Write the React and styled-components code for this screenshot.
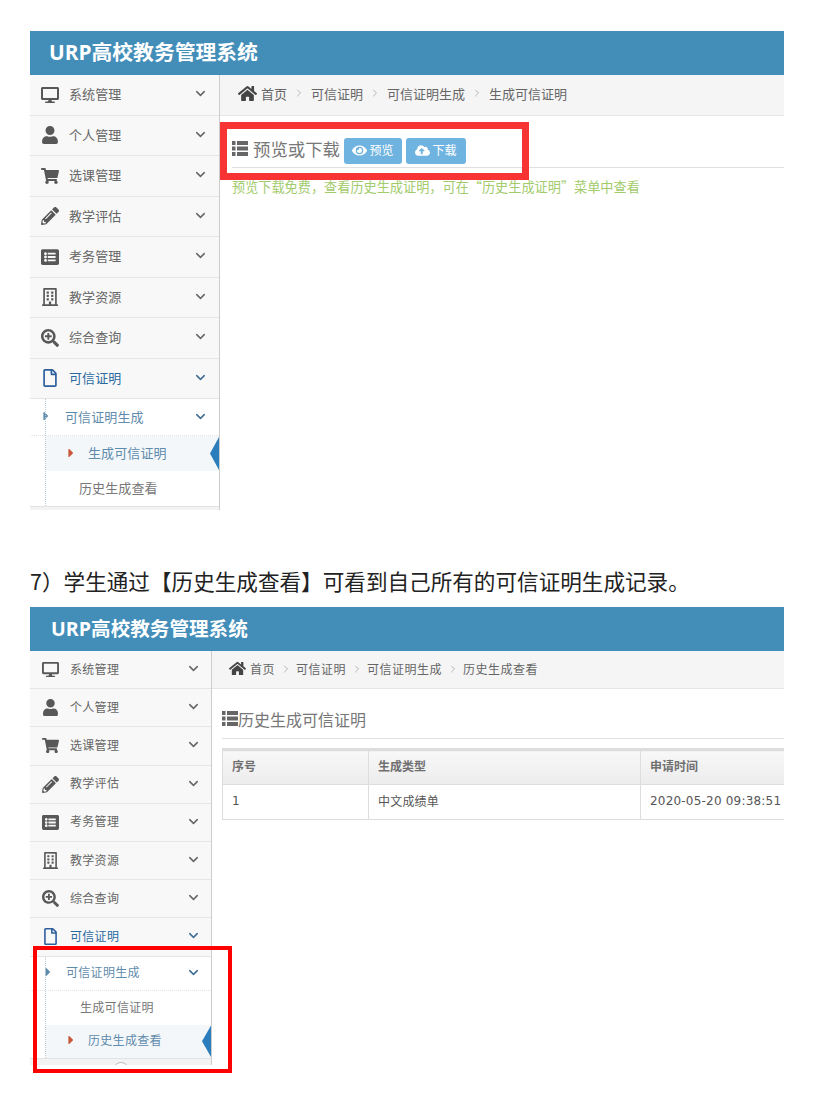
import React from 'react'
import styled, { createGlobalStyle } from 'styled-components'
import {
  FaDesktop,
  FaUser,
  FaShoppingCart,
  FaPencilAlt,
  FaListAlt,
  FaRegBuilding,
  FaSearchPlus,
  FaRegFile,
  FaHome,
  FaEye,
  FaCloudUploadAlt,
  FaCaretRight,
} from 'react-icons/fa'
import { LuChevronDown, LuChevronRight } from 'react-icons/lu'

const GlobalStyle = createGlobalStyle`
  html, body {
    margin: 0;
    padding: 0;
    background: #fff;
  }
  body {
    font-family: "Open Sans", "Noto Sans CJK SC", sans-serif;
  }
`

const Page = styled.div`
  width: 814px;
  height: 1094px;
  padding: 31px 30px 0;
  box-sizing: border-box;
  overflow: hidden;
`

const Screen = styled.section`
  position: relative;
  width: 754px;
  height: ${p => (p.$small ? '458px' : '479px')};
  display: flex;
  flex-direction: column;
`

const Navbar = styled.header`
  flex: none;
  height: 44px;
  background: #438eb9;
  color: #fff;
  font-weight: 700;
  font-size: ${p => (p.$small ? '19.6px' : '20.8px')};
  line-height: ${p => (p.$small ? '44px' : '42px')};
  padding-left: ${p => (p.$small ? '21px' : '19px')};
`

const Body = styled.div`
  flex: 1;
  display: flex;
  min-height: 0;
`

const Sidebar = styled.nav`
  flex: none;
  box-sizing: border-box;
  width: ${p => (p.$small ? '182px' : '190px')};
  background: #f5f5f5;
  border-right: 1px solid #ccc;
  display: flex;
  flex-direction: column;
`

const MenuRow = styled.div`
  flex: none;
  box-sizing: border-box;
  height: ${p => (p.$small ? '38.2px' : '40.5px')};
  display: flex;
  align-items: center;
  background: #f8f8f8;
  border-bottom: 1px solid #e5e5e5;
  color: ${p => (p.$open ? '#2b6aa0' : '#666')};
  font-size: ${p => (p.$small ? '12px' : '13px')};
  letter-spacing: ${p => (p.$small ? '0.3px' : '0.1px')};
  padding-right: ${p => (p.$small ? '10px' : '11px')};
  padding-bottom: 2px;
`

const MenuIcon = styled.span`
  flex: none;
  box-sizing: border-box;
  width: ${p => (p.$small ? '40px' : '39px')};
  padding: ${p => (p.$small ? '0 10px 0 11px' : '0 9px')};
  display: flex;
  justify-content: center;
  color: ${p => (p.$open ? '#2e5f9e' : '#585858')};
  font-size: ${p => (p.$small ? '17px' : '18px')};
  transform: translateY(1px);
`

const MenuLabel = styled.span`
  flex: 1;
`

const Chevron = styled(LuChevronDown)`
  flex: none;
  width: 15px;
  height: 15px;
  stroke-width: 2.4px;
  color: ${p => (p.$open ? '#3f6d96' : '#666')};
`

const SubMenu = styled.div`
  position: relative;
  flex: none;
  background: #fff;

  &::before {
    content: '';
    position: absolute;
    left: 15px;
    top: 0;
    bottom: 0;
    border-left: 1px dotted #b7cad9;
  }
`

const SubHead = styled.div`
  box-sizing: border-box;
  height: ${p => (p.$small ? '34.5px' : '37px')};
  display: flex;
  align-items: center;
  color: #5f8bac;
  font-size: ${p => (p.$small ? '12px' : '13px')};
  letter-spacing: ${p => (p.$small ? '0.3px' : '0.1px')};
  border-bottom: 1px dotted #e2e2e2;
  padding-right: ${p => (p.$small ? '10px' : '11px')};
  padding-bottom: 2px;
`

const Caret = styled(FaCaretRight)`
  flex: none;
  width: 14px;
  height: 14px;
  color: ${p => p.$color};
  margin: ${p => p.$margin};
`

const SubItem = styled.div`
  position: relative;
  box-sizing: border-box;
  height: ${p => (p.$small ? '33.5px' : '35px')};
  display: flex;
  align-items: center;
  font-size: ${p => (p.$small ? '12px' : '13px')};
  letter-spacing: ${p => (p.$small ? '0.3px' : '0.1px')};
  margin-left: 16px;
  padding-left: ${p => (p.$active ? '0' : p.$small ? '34px' : '33px')};
  padding-bottom: 2px;
  color: ${p => (p.$active ? '#5f8bac' : '#777')};
  background: ${p => (p.$active ? '#f3f7fa' : '#fff')};
`

const Notch = styled.i`
  position: absolute;
  right: 0;
  top: 1px;
  bottom: 1px;
  width: 9px;
  background: #2b7dbc;
  clip-path: polygon(100% 0, 100% 100%, 0 50%);
`

const SidebarFoot = styled.div`
  flex: 1;
  position: relative;
  background: #f3f3f3;
  border-top: 1px solid #e3e3e3;
  overflow: hidden;
`

const Collapse = styled.i`
  position: absolute;
  left: 83px;
  top: 3px;
  width: 14px;
  height: 14px;
  border-radius: 50%;
  border: 1px solid #bbb;
  background: #fff;
`

const Main = styled.main`
  flex: 1;
  min-width: 0;
  display: flex;
  flex-direction: column;
`

const Breadcrumb = styled.div`
  flex: none;
  box-sizing: border-box;
  height: ${p => (p.$small ? '38.2px' : '41px')};
  display: flex;
  align-items: center;
  background: #f5f5f5;
  border-bottom: 1px solid #e5e5e5;
  color: #666;
  font-size: ${p => (p.$small ? '12px' : '13px')};
  letter-spacing: ${p => (p.$small ? '0.5px' : '0')};
  padding: 0 0 ${p => (p.$small ? '2px' : '4px')} ${p => (p.$small ? '17px' : '18px')};
`

const HomeIcon = styled(FaHome)`
  width: ${p => (p.$small ? '17px' : '19px')};
  height: ${p => (p.$small ? '17px' : '19px')};
  color: #444;
  margin-right: 4px;
`

const Separator = styled(LuChevronRight)`
  width: 12px;
  height: 12px;
  color: #b5b5b5;
  margin: ${p => (p.$small ? '0 4.5px' : '0 6px')};
`

const Content = styled.div`
  flex: 1;
  padding-left: ${p => (p.$small ? '10px' : '12px')};
`

const TitleBar = styled.div`
  display: flex;
  align-items: center;
  box-sizing: border-box;
  height: ${p => (p.$small ? '50px' : '52px')};
  padding-top: ${p => (p.$small ? '10px' : '14px')};
  border-bottom: 1px solid #e0e0e0;
  color: #777;
  font-size: ${p => (p.$small ? '16px' : '17.4px')};
`

const TitleIcon = styled.svg`
  flex: none;
  width: 16px;
  height: 15px;
  fill: #666;
  margin-right: ${p => (p.$small ? '0' : '5px')};
`

const ActionButton = styled.span`
  display: inline-flex;
  align-items: center;
  justify-content: center;
  gap: 2px;
  box-sizing: border-box;
  height: 26px;
  width: ${p => p.$width};
  margin: 4px 0 0 ${p => p.$gap};
  padding-bottom: 1px;
  background: #6fb3e0;
  border-radius: 3px;
  color: #fff;
  font-size: 12px;

  svg {
    width: 15px;
    height: 15px;
  }
`

const Notice = styled.p`
  margin: 10px 0 0;
  color: #a2cb6c;
  font-family: "Noto Sans CJK SC", sans-serif;
  font-size: 13.16px;
  line-height: 18px;
`

const RecordTable = styled.table`
  width: 100%;
  margin-top: 9px;
  table-layout: fixed;
  border-collapse: collapse;
  font-size: 12px;
  color: #555;
  border-top: 3px solid #ddd;

  th, td {
    box-sizing: border-box;
    text-align: left;
    padding: 0 0 3px 9px;
    border: 1px solid #ddd;
    border-top: 0;
    white-space: nowrap;
  }
  th {
    height: 35px;
    font-weight: 700;
    color: #707070;
    background: linear-gradient(#f8f8f8, #ececec);
  }
  td {
    height: 35px;
    font-family: "DejaVu Sans", "Noto Sans CJK SC", sans-serif;
    letter-spacing: 0.2px;
  }
  tr > :last-child {
    border-right: 0;
  }
`

const Caption = styled.p`
  margin: 0;
  height: 97px;
  box-sizing: border-box;
  padding-top: 56px;
  color: #222;
  font-size: 21.6px;
  line-height: 30px;
  font-family: "Noto Sans CJK SC", sans-serif;
  white-space: nowrap;
`

// the red marks someone drew on top of the screenshots
const Highlight = styled.div`
  position: absolute;
  box-sizing: border-box;
  left: ${p => p.$left}px;
  top: ${p => p.$top}px;
  width: ${p => p.$width}px;
  height: ${p => p.$height}px;
  border: ${p => p.$border};
  pointer-events: none;
`

const menus = [
  { label: '系统管理', icon: <FaDesktop /> },
  { label: '个人管理', icon: <FaUser /> },
  { label: '选课管理', icon: <FaShoppingCart /> },
  { label: '教学评估', icon: <FaPencilAlt /> },
  { label: '考务管理', icon: <FaListAlt /> },
  { label: '教学资源', icon: <FaRegBuilding /> },
  { label: '综合查询', icon: <FaSearchPlus /> },
  { label: '可信证明', icon: <FaRegFile />, open: true },
]

const ListGlyph = ({ small }) => (
  <TitleIcon $small={small} viewBox="0 0 16 15">
    <rect x="0" y="0" width="3.5" height="4" />
    <rect x="5" y="0" width="11" height="4" />
    <rect x="0" y="5.5" width="3.5" height="4" />
    <rect x="5" y="5.5" width="11" height="4" />
    <rect x="0" y="11" width="3.5" height="4" />
    <rect x="5" y="11" width="11" height="4" />
  </TitleIcon>
)

const SideMenu = ({ small, active }) => (
  <Sidebar $small={small}>
    {menus.map(menu => (
      <MenuRow key={menu.label} $small={small} $open={menu.open}>
        <MenuIcon $small={small} $open={menu.open}>{menu.icon}</MenuIcon>
        <MenuLabel>{menu.label}</MenuLabel>
        <Chevron $open={menu.open} />
      </MenuRow>
    ))}
    <SubMenu>
      <SubHead $small={small}>
        <Caret $color="#5f8bac" $margin={small ? '0 11px 0 11px' : '0 12px 0 9px'} />
        <MenuLabel>可信证明生成</MenuLabel>
        <Chevron $open />
      </SubHead>
      {['生成可信证明', '历史生成查看'].map(item => (
        <SubItem key={item} $small={small} $active={item === active}>
          {item === active && <Caret $color="#c8583a" $margin="0 10px 0 18px" />}
          {item}
          {item === active && <Notch />}
        </SubItem>
      ))}
    </SubMenu>
    <SidebarFoot>{small && <Collapse />}</SidebarFoot>
  </Sidebar>
)

const Crumbs = ({ small, items }) => (
  <Breadcrumb $small={small}>
    <HomeIcon $small={small} />
    {items.map((item, i) => (
      <React.Fragment key={item}>
        {i > 0 && <Separator $small={small} />}
        {item}
      </React.Fragment>
    ))}
  </Breadcrumb>
)

const App = () => (
  <Page>
    <GlobalStyle />
    <Screen>
      <Navbar>URP高校教务管理系统</Navbar>
      <Body>
        <SideMenu active="生成可信证明" />
        <Main>
          <Crumbs items={['首页', '可信证明', '可信证明生成', '生成可信证明']} />
          <Content>
            <TitleBar>
              <ListGlyph />
              预览或下载
              <ActionButton $width="58px" $gap="4px"><FaEye />预览</ActionButton>
              <ActionButton $width="60px" $gap="4px"><FaCloudUploadAlt />下载</ActionButton>
            </TitleBar>
            <Notice>预览下载免费，查看历史生成证明，可在“历史生成证明”菜单中查看</Notice>
          </Content>
        </Main>
      </Body>
      <Highlight $left={190} $top={91} $width={309} $height={58} $border="7px solid #f73333" />
    </Screen>
    <Caption>7）学生通过【历史生成查看】可看到自己所有的可信证明生成记录。</Caption>
    <Screen $small>
      <Navbar $small>URP高校教务管理系统</Navbar>
      <Body>
        <SideMenu small active="历史生成查看" />
        <Main>
          <Crumbs small items={['首页', '可信证明', '可信证明生成', '历史生成查看']} />
          <Content $small>
            <TitleBar $small>
              <ListGlyph small />
              历史生成可信证明
            </TitleBar>
            <RecordTable>
              <colgroup>
                <col width="146" />
                <col width="272" />
                <col />
              </colgroup>
              <thead>
                <tr>
                  <th>序号</th>
                  <th>生成类型</th>
                  <th>申请时间</th>
                </tr>
              </thead>
              <tbody>
                <tr>
                  <td>1</td>
                  <td>中文成绩单</td>
                  <td>2020-05-20 09:38:51</td>
                </tr>
              </tbody>
            </RecordTable>
          </Content>
        </Main>
      </Body>
      <Highlight $left={3} $top={339} $width={199} $height={127} $border="4px solid #f00" />
    </Screen>
  </Page>
)

export default App
